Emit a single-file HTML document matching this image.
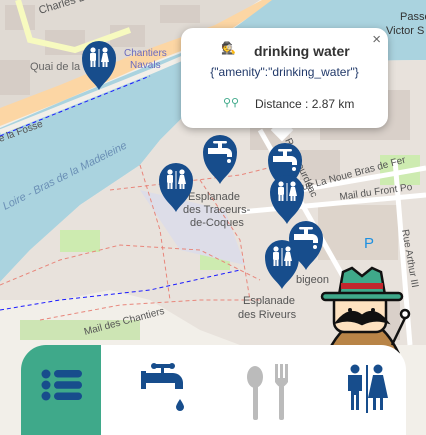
<!DOCTYPE html>
<html><head><meta charset="utf-8"><style>
*{margin:0;padding:0;box-sizing:border-box}
body{width:426px;height:426px;overflow:hidden;position:relative;background:#f2efe9;font-family:"Liberation Sans",sans-serif}
svg{position:absolute;left:0;top:0}
.pop{position:absolute;left:181px;top:28px;width:207px;height:100px;background:#fff;border-radius:12px;box-shadow:0 2px 8px rgba(0,0,0,.3);color:#333}
.tail{position:absolute;left:274px;top:122px;width:16px;height:16px;background:#fff;transform:rotate(45deg)}
.bar{position:absolute;left:21px;top:345px;width:385px;height:90px;background:#fff;border-radius:25px 25px 0 0;overflow:hidden}
.green{position:absolute;left:0;top:0;width:80px;height:90px;background:#3fa98a}
</style></head><body>
<svg width="426" height="426" viewBox="0 0 426 426">
<rect x="0" y="0" width="426" height="426" fill="#f2efe9"/>
<polygon points="0,0 260,0 215,30 140,60 60,95 0,118" fill="#e0dad3"/>
<g fill="#d6cdc6"><rect x="5" y="5" width="30" height="25"/><rect x="45" y="30" width="40" height="25"/><rect x="0" y="60" width="30" height="35"/><rect x="110" y="25" width="35" height="22"/><rect x="160" y="5" width="40" height="18"/></g>
<polyline points="18,0 30,40 75,50 130,30" fill="none" stroke="#f7fabf" stroke-width="6"/>
<polygon points="0,108 60,85 140,52 215,25 262,0 275,0 222,35 145,65 65,100 0,126" fill="#fcd6a4"/>
<polygon points="0,128 65,100 145,67 222,37 272,0 426,0 426,60 230,62 200,100 160,140 140,165 80,205 30,250 0,282" fill="#aad3df"/>
<polyline points="0,132 65,106 150,72 225,40" fill="none" stroke="#f2efe9" stroke-width="5"/>
<polyline points="0,136 65,110 150,76" fill="none" stroke="#1a1aff" stroke-width="1" stroke-dasharray="4,3"/>
<polygon points="230,62 426,60 426,345 240,345 200,330 150,300 110,290 60,300 0,300 0,282 30,250 80,205 140,165 160,140 200,100" fill="#e8e2dc"/>
<g fill="#d9d0c9"><rect x="320" y="90" width="90" height="50"/><rect x="300" y="150" width="40" height="30"/><rect x="250" y="120" width="40" height="30"/><rect x="340" y="300" width="60" height="40"/></g>
<rect x="318" y="205" width="80" height="55" fill="#ddd4cb"/>
<g fill="#cdebb0"><rect x="380" y="155" width="40" height="30"/><rect x="60" y="230" width="40" height="22"/><rect x="200" y="230" width="30" height="40"/><rect x="20" y="320" width="120" height="20" fill="#cde5b4"/></g>
<polygon points="140,190 225,210 245,265 180,250" fill="#dddde8"/>
<g stroke="#fff" stroke-width="5" fill="none"><line x1="240" y1="212" x2="426" y2="195"/><line x1="300" y1="190" x2="426" y2="168"/><line x1="395" y1="160" x2="410" y2="345"/><line x1="260" y1="130" x2="345" y2="280"/></g>
<g stroke="#e8867b" stroke-width="1" fill="none" stroke-dasharray="4,3"><polyline points="0,285 60,260 120,245 200,250 260,280"/><polyline points="40,320 120,305 200,300 260,300"/><polyline points="140,165 160,230 170,300"/><polyline points="200,180 240,240 250,300"/><polyline points="230,70 390,62"/><polyline points="110,190 240,175 300,160"/></g>
<polyline points="0,310 60,300 150,290 240,270" fill="none" stroke="#1a1aff" stroke-width="1" stroke-dasharray="4,3"/>
<g font-family="Liberation Sans,sans-serif" font-size="11" fill="#555">
<text x="30" y="70" fill="#666">Quai de la</text>
<text x="124" y="56" fill="#6a6abf" font-size="10">Chantiers</text>
<text x="130" y="68" fill="#6a6abf" font-size="10">Navals</text>
<text x="40" y="14" transform="rotate(-17 40 14)">Charles Brunellière</text>
<text x="0" y="142" transform="rotate(-20 0 142)" font-size="10">e la Fosse</text>
<text x="5" y="210" transform="rotate(-27 5 210)" fill="#6a8fb5" font-style="italic" font-size="11">Loire - Bras de la Madeleine</text>
<text x="188" y="200">Esplanade</text><text x="183" y="213">des Traceurs-</text><text x="190" y="226">de-Coques</text>
<text x="243" y="304">Esplanade</text><text x="238" y="318">des Riveurs</text>
<text x="296" y="283">bigeon</text>
<text x="296" y="192" transform="rotate(-15 296 192)" font-size="10">Rue La Noue Bras de Fer</text>
<text x="340" y="200" transform="rotate(-8 340 200)" font-size="10">Mail du Front Po</text>
<text x="285" y="140" transform="rotate(65 285 140)" font-size="10">Rue Sourdéac</text>
<text x="402" y="230" transform="rotate(80 402 230)" font-size="10">Rue Arthur III</text>
<text x="85" y="335" transform="rotate(-15 85 335)" font-size="10">Mail des Chantiers</text>
<text x="400" y="20" fill="#333">Passe</text><text x="386" y="34" fill="#333">Victor S</text>
<text x="364" y="248" fill="#1e90e0" font-size="15">P</text>
</g>
<defs><g id="pin"><path d="M0,32 C-4,24 -17,18 -17,0 A17,17 0 0 1 17,0 C17,18 4,24 0,32Z" fill="#174d8c"/></g>
<g id="wc" fill="#fff"><circle cx="-6" cy="-8" r="2.6"/><rect x="-9" y="-5" width="6" height="8" rx="1"/><rect x="-8.5" y="3" width="2" height="6"/><rect x="-5.5" y="3" width="2" height="6"/><rect x="-0.5" y="-9" width="1" height="18"/><circle cx="6" cy="-8" r="2.6"/><path d="M4,-5 H8 L10,4 H2Z"/><rect x="3.5" y="3" width="2" height="6"/><rect x="6.5" y="3" width="2" height="6"/></g>
<g id="tap" fill="#fff"><rect x="-2" y="-10" width="4" height="6"/><rect x="-7" y="-11" width="14" height="2.5" rx="1.2"/><path d="M-12,-4 H6 A6,6 0 0 1 12,2 V5 H7 V2 H-12Z"/><circle cx="9" cy="9" r="2"/></g></defs>
<g transform="translate(99,58)"><use href="#pin"/><use href="#wc"/></g>
<g transform="translate(176,180)"><use href="#pin"/><use href="#wc"/></g>
<g transform="translate(220,152)"><use href="#pin"/><use href="#tap"/></g>
<g transform="translate(285,160)"><use href="#pin"/><use href="#tap"/></g>
<g transform="translate(287,192)"><use href="#pin"/><use href="#wc"/></g>
<g transform="translate(306,238)"><use href="#pin"/><use href="#tap"/></g>
<g transform="translate(282,257)"><use href="#pin"/><use href="#wc"/></g>
<g stroke="#111" stroke-width="2.5">
<path d="M328,352 Q343,322 363,320 Q383,322 398,352Z" fill="#b88447"/>
<rect x="334" y="292" width="52" height="40" rx="10" fill="#fde2c0"/>
<path d="M339,295 L343,272 L352,268 L362,276 L372,268 L381,272 L385,295Z" fill="#3fa98a"/>
<rect x="341" y="283" width="42" height="6" fill="#c1272d" stroke="none"/>
<rect x="322" y="293" width="80" height="7" rx="3.5" fill="#3fa98a"/>
<path d="M337,322 Q350,306 362,316 Q374,306 387,322 Q374,318 362,324 Q350,318 337,322Z" fill="#111"/>
<line x1="392" y1="345" x2="405" y2="318"/><circle cx="405" cy="314" r="4" fill="#fff"/>
</g>
<circle cx="350" cy="310" r="2" fill="#111"/><circle cx="373" cy="310" r="2" fill="#111"/>
</svg>
<div class="tail"></div>
<div class="pop">
<div style="position:absolute;right:7px;top:3px;font-size:15px;color:#666">×</div>
<div style="position:absolute;left:40px;top:13px;font-size:12px">🕵</div>
<div style="position:absolute;left:73px;top:15px;font-size:14px;font-weight:bold;color:#333">drinking water</div>
<div style="position:absolute;left:0;width:207px;top:37px;text-align:center;font-size:12px;color:#223a6a">{"amenity":"drinking_water"}</div>
<div style="position:absolute;left:42px;top:68px;font-size:11px;color:#3fa98a">⚲⚲</div>
<div style="position:absolute;left:74px;top:69px;font-size:12px;color:#333">Distance : 2.87 km</div>
</div>
<div class="bar"><div class="green"></div>
<svg width="385" height="90" style="left:0;top:0">
<g fill="#174d8c"><circle cx="25" cy="29" r="4.5"/><circle cx="25" cy="40" r="4.5"/><circle cx="25" cy="51" r="4.5"/><rect x="33" y="25" width="28" height="7.5" rx="3.7"/><rect x="33" y="36.3" width="28" height="7.5" rx="3.7"/><rect x="33" y="47.5" width="28" height="7.5" rx="3.7"/></g>
<g fill="#174d8c"><rect x="140" y="21" width="3" height="8"/><rect x="133" y="19" width="18" height="4" rx="2"/><circle cx="133" cy="21" r="3"/><circle cx="151" cy="21" r="3"/><path d="M122,28 H152 A10,10 0 0 1 162,38 V44 H154 V38 H122Z"/><rect x="120" y="26" width="5" height="18"/><path d="M159,54 Q155,60 155,62 A4,4 0 0 0 163,62 Q163,60 159,54Z"/></g>
<g fill="#bbb"><ellipse cx="234" cy="32" rx="8" ry="11"/><rect x="232" y="40" width="5" height="35" rx="2"/><rect x="254" y="19" width="3" height="16"/><rect x="259" y="19" width="3" height="16"/><rect x="264" y="19" width="3" height="16"/><path d="M254,33 H267 V37 Q264,42 260,42 Q257,42 254,37Z"/><rect x="258" y="40" width="5" height="35" rx="2"/></g>
<g fill="#174d8c"><circle cx="334" cy="24" r="4.5"/><path d="M327,30 H341 V46 H338 V65 H335 V50 H333 V65 H330 V46 H327Z"/><rect x="345" y="20" width="2" height="48"/><circle cx="357" cy="24" r="4.5"/><path d="M352,30 H362 L367,53 H347Z"/><rect x="352" y="50" width="3" height="15"/><rect x="359" y="50" width="3" height="15"/></g>
</svg></div>
</body></html>
